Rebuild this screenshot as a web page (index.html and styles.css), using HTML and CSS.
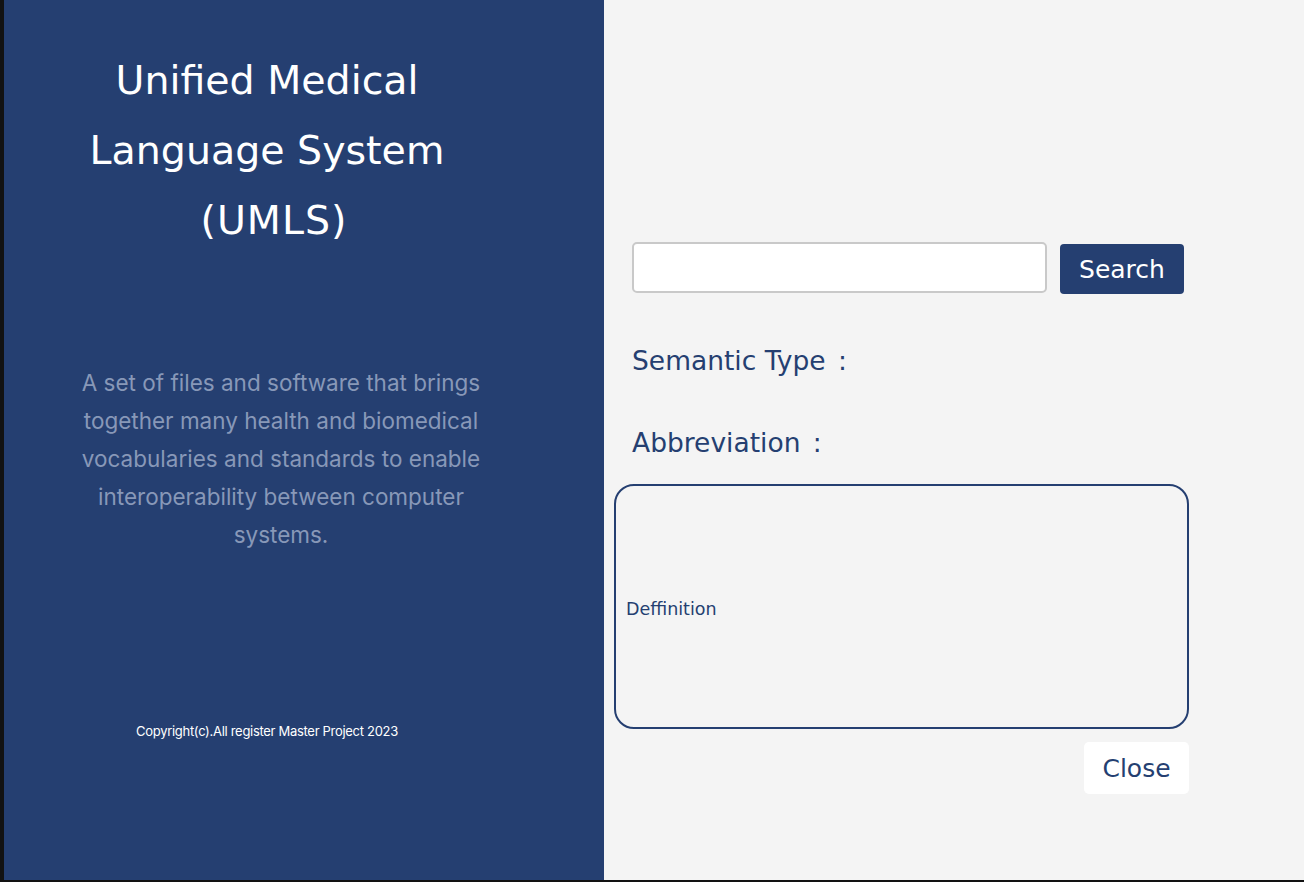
FILE: index.html
```html
<!DOCTYPE html>
<html lang="en">

<head>
    <meta charset="UTF-8">
    <meta name="viewport" content="width=device-width, initial-scale=1.0">
    <title>UMLS Search</title>

    <link rel="stylesheet" href="styles.css">
</head>

<body>

    <div id="app">
        <div id="sidePanel">
            <div class="heading">
                Unified Medical<br>Language System<br><span class="acronym">(UMLS)</span>
            </div>

            <div class="about">
                A set of files and software that brings together many health and biomedical vocabularies and standards to enable interoperability between computer systems.
            </div>

            <div class="copyright">
                Copyright(c).All register Master Project 2023
            </div>
        </div>

        <div id="mainPanel">
            <form class="searchRow">
                <input type="text" id="term">
                <input type="submit" value="Search" class="btnSearch">
            </form>

            <div class="label first">Semantic Type <span class="colon">:</span></div>
            <div class="label">Abbreviation <span class="colon">:</span></div>

            <div class="defBox">
                <span>Deffinition</span>
            </div>

            <div class="closeRow">
                <button class="btnClose">Close</button>
            </div>
        </div>
    </div>

</body>

</html>
```

FILE: styles.css
```css
body {
    margin: 0;
    padding: 0 0 2px 4px;
    background-color: #121212;
}

#app {
    display: flex;
    height: 880px;
}

#sidePanel {
    width: 600px;
    background-color: #253f71;
    color: #ffffff;
}

.heading {
    width: 526px;
    padding-top: 45px;
    text-align: center;
    font-family: "DejaVu Sans", Verdana, sans-serif;
    font-size: 39.5px;
    line-height: 70px;
}

.acronym {
    padding-left: 14px;
    letter-spacing: 1px;
}

.about {
    width: 446px;
    margin: 109px 0 0 54px;
    text-align: center;
    font-family: Inter, "Noto Sans", sans-serif;
    font-size: 22.5px;
    line-height: 38px;
    color: #8898b8;
}

.copyright {
    width: 526px;
    margin-top: 167px;
    text-align: center;
    font-family: Inter, "Noto Sans", sans-serif;
    font-size: 13px;
    letter-spacing: -0.3px;
    line-height: 20px;
}

#mainPanel {
    flex: 1;
    background-color: #f4f4f4;
    padding: 242px 0 0 10px;
    font-family: "DejaVu Sans", Verdana, sans-serif;
    color: #253f71;
}

.searchRow {
    display: flex;
    align-items: flex-start;
    margin: 0 0 0 18px;
}

#term {
    width: 415px;
    height: 51px;
    box-sizing: border-box;
    border: 2px solid #c9c9c9;
    border-radius: 5px;
    background-color: #ffffff;
    margin: 0;
}

.btnSearch {
    width: 124px;
    height: 50px;
    margin: 2px 0 0 13px;
    border: none;
    border-radius: 4px;
    background-color: #253f71;
    color: #ffffff;
    font-family: "DejaVu Sans", Verdana, sans-serif;
    font-size: 25px;
}

.label {
    margin-left: 18px;
    font-size: 26.5px;
    line-height: 30px;
    height: 30px;
    margin-top: 52px;
}

.colon {
    padding-left: 4px;
}

.defBox {
    width: 575px;
    height: 245px;
    box-sizing: border-box;
    margin-top: 26px;
    border: 2px solid #253f71;
    border-radius: 20px;
    display: flex;
    align-items: center;
    padding: 4px 0 0 10px;
    font-size: 17.5px;
}

.closeRow {
    width: 575px;
    display: flex;
    justify-content: flex-end;
    margin-top: 13px;
}

.btnClose {
    width: 105px;
    height: 52px;
    border: none;
    border-radius: 5px;
    background-color: #ffffff;
    color: #253f71;
    font-family: "DejaVu Sans", Verdana, sans-serif;
    font-size: 25px;
}
```
